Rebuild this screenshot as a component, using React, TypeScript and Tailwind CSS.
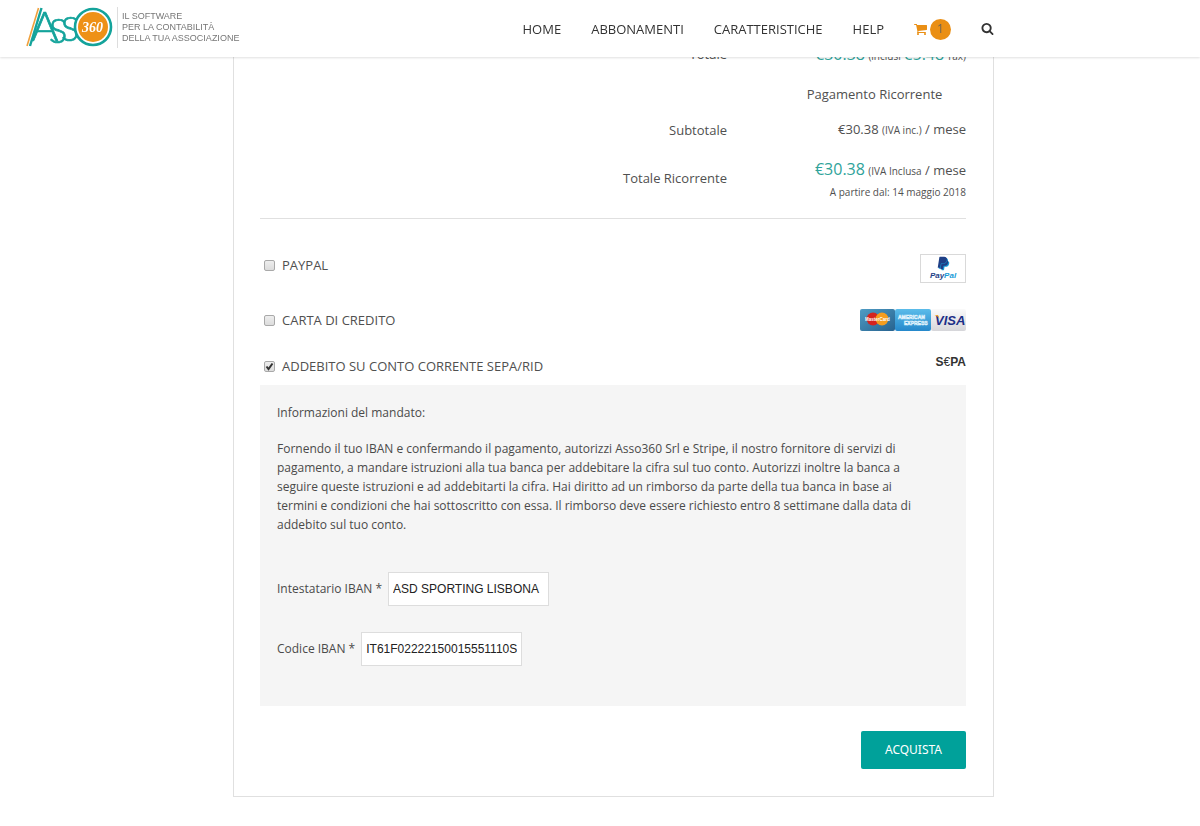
import { useState } from "react";
import { FaPaypal } from "react-icons/fa";

const menu = ["HOME", "ABBONAMENTI", "CARATTERISTICHE", "HELP"];

const Logo = () => {
  return (
    <a href="#" className="flex items-center gap-1">
      <svg className="overflow-visible" width="87" height="42" viewBox="0 0 87 42" aria-label="Asso 360" role="img">
        <path d="M1 39 L12.500 1" stroke="#f0a03c" strokeWidth="1.600" fill="none" />
        <path d="M4 39 L15.500 1" stroke="#14a39b" strokeWidth="2.400" fill="none" />
        <text x="5 23 35" y="34 36 34" fontSize="42" fontWeight="300" fill="#14a39b" stroke="#14a39b" strokeWidth="0.700" fontFamily="Lato, sans-serif">
          A<tspan fontSize="34">SS</tspan>
        </text>
        <circle cx="67" cy="20" r="18" fill="#fff" stroke="#14a39b" strokeWidth="2.600" />
        <circle cx="67" cy="20" r="15" fill="#ee9116" />
        <text x="66.500" y="24.500" textAnchor="middle" fontSize="14" fontWeight="700" fontStyle="italic" fill="#fff" fontFamily="'Liberation Serif', serif">360</text>
      </svg>
      <span className="border-l border-[#dddddd] py-1 pl-1 font-['Liberation_Sans',sans-serif] text-[9px] leading-[11px] text-[#777777]">
        IL SOFTWARE<br />PER LA CONTABILITÀ<br />DELLA TUA ASSOCIAZIONE
      </span>
    </a>
  );
};

const Header = () => {
  return (
    <header className="fixed inset-x-0 top-0 z-10 flex h-[57px] items-center justify-between bg-white pb-[2px] pl-[26px] pr-[206px] shadow-[0_1px_2px_rgba(0,0,0,0.12)]">
      <Logo />
      <nav className="flex items-center gap-[30px] pt-[3px] text-[13px] font-medium text-[#333333]">
        {menu.map((item) => (
          <a key={item} href="#">{item}</a>
        ))}
        <a href="#" aria-label="Carrello" className="flex items-center gap-[3px] text-[#ea8f14]">
          <svg width="13" height="12" viewBox="0 128 1664 1536" fill="currentColor">
            <path d="M640 1536q0 52-38 90t-90 38-90-38-38-90 38-90 90-38 90 38 38 90zm896 0q0 52-38 90t-90 38-90-38-38-90 38-90 90-38 90 38 38 90zm128-1088v512q0 24-16.5 42.5t-40.5 21.5l-1044 122q13 60 13 70 0 16-24 64h920q26 0 45 19t19 45-19 45-45 19h-1024q-26 0-45-19t-19-45q0-11 8-31.5t16-36 21.5-40 15.5-29.5l-177-823h-204q-26 0-45-19t-19-45 19-45 45-19h256q16 0 28.5 6.5t19.5 15.5 13 24.5 8 26 5.5 29.5 4.5 26h1201q26 0 45 19t19 45z" />
          </svg>
          <span className="flex size-[21px] items-center justify-center rounded-full bg-[#ea8f14] text-xs font-normal text-[#6f6552]">1</span>
        </a>
        <button type="button" aria-label="Cerca">
          <svg width="13" height="12" viewBox="0 128 1664 1664" fill="currentColor">
            <path d="M1152 832q0-185-131.5-316.5T704 384 387.5 515.5 256 832t131.5 316.5T704 1280t316.5-131.5T1152 832zm512 832q0 52-38 90t-90 38q-54 0-90-38l-343-342q-179 124-399 124-143 0-273.5-55.5t-225-150-150-225T0 832t55.5-273.5 150-225 225-150T704 128t273.5 55.5 225 150 150 225T1408 832q0 220-124 399l343 343q37 37 37 90z" />
          </svg>
        </button>
      </nav>
    </header>
  );
};

const Totals = () => {
  return (
    <table className="w-full border-b border-[#e0e0e0] text-right">
      <tbody>
        <tr className="h-[44px]">
          <th className="pr-[56px] font-normal">Totale</th>
          <td className="w-[183px] whitespace-nowrap">
            <span className="text-base text-[#2fa39a]">€30.38</span>{" "}
            <small className="text-[10px]">(inclusi <span className="text-base text-[#2fa39a]">€5.48</span> Tax)</small>
          </td>
        </tr>
        <tr className="h-[36px]">
          <td></td>
          <th className="text-center font-normal">Pagamento Ricorrente</th>
        </tr>
        <tr className="h-[36px]">
          <th className="pr-[56px] font-normal">Subtotale</th>
          <td>€30.38 <small className="text-[10px]">(IVA inc.)</small> / mese</td>
        </tr>
        <tr className="h-[70px]">
          <th className="pb-[8px] pr-[56px] font-normal">Totale Ricorrente</th>
          <td className="pb-[8px]">
            <div className="leading-[24px]">
              <span className="text-base text-[#2fa39a]">€30.38</span>{" "}
              <small className="text-[10px]">(IVA Inclusa</small> / mese
            </div>
            <div className="text-[10px] leading-[18px]">A partire dal: 14 maggio 2018</div>
          </td>
        </tr>
      </tbody>
    </table>
  );
};

const PaypalLogo = () => {
  return (
    <span className="flex h-[29px] w-[46px] flex-col items-center justify-center border border-[#d9d9d9] bg-white">
      <span className="relative h-[15px] w-[14px]">
        <FaPaypal className="absolute left-px top-px size-[14px] text-[#179bd7]" />
        <FaPaypal className="absolute left-0 top-0 size-[14px] text-[#1f3f86]" />
      </span>
      <span className="font-['Liberation_Sans',sans-serif] text-[8px] font-bold italic leading-[9px] text-[#1f3f86]">
        Pay<span className="text-[#179bd7]">Pal</span>
      </span>
    </span>
  );
};

const CardLogos = () => {
  return (
    <svg width="106" height="22" viewBox="0 0 106 22" role="img" aria-label="MasterCard, American Express, Visa">
      <defs>
        <linearGradient id="mc" x1="0" y1="0" x2="1" y2="1">
          <stop offset="0" stopColor="#4f9cc4" />
          <stop offset="1" stopColor="#27628f" />
        </linearGradient>
        <linearGradient id="amex" x1="0" y1="0" x2="0" y2="1">
          <stop offset="0" stopColor="#5bbcea" />
          <stop offset="1" stopColor="#2588cb" />
        </linearGradient>
        <linearGradient id="visa" x1="0" y1="0" x2="0" y2="1">
          <stop offset="0" stopColor="#fafafa" />
          <stop offset="1" stopColor="#d6d6da" />
        </linearGradient>
      </defs>
      <rect width="35" height="22" rx="2" fill="url(#mc)" />
      <circle cx="13" cy="10" r="6.500" fill="#d6231f" />
      <circle cx="22" cy="10" r="6.500" fill="#f59d1f" />
      <text x="17.500" y="12" textAnchor="middle" fontSize="4.500" fontWeight="700" fill="#fff" fontFamily="'Liberation Sans', sans-serif">MasterCard</text>
      <rect x="35" width="36" height="22" rx="2" fill="url(#amex)" />
      <g fill="none" stroke="#dff2fc" strokeWidth="0.600" fontSize="5" fontWeight="700" fontFamily="'Liberation Sans', sans-serif">
        <text x="38" y="10">AMERICAN</text>
        <text x="44" y="15.500">EXPRESS</text>
      </g>
      <rect x="71" width="35" height="22" rx="2" fill="url(#visa)" />
      <text x="75" y="15.500" fontSize="13" fontWeight="700" fontStyle="italic" fill="#1c2f87" fontFamily="'Liberation Sans', sans-serif">VISA</text>
      <path d="M74.500 6 h3.500 l1.500 4 q-1.500-3-5-4z" fill="#f0a020" />
    </svg>
  );
};

type OptionProps = {
  id: string;
  label: string;
  checked: boolean;
  onChange: () => void;
};

const Option = ({ id, label, checked, onChange }: OptionProps) => {
  return (
    <label htmlFor={id} className="flex items-center gap-[7px] pl-[4px]">
      <span className="relative size-[11px]">
        <input
          id={id}
          type="checkbox"
          checked={checked}
          onChange={onChange}
          className="block size-[11px] appearance-none rounded-[2px] border border-[#a9a9a9] bg-linear-to-b from-[#eeeeee] to-[#dcdcdc]"
        />
        {checked && (
          <svg className="pointer-events-none absolute inset-0" width="11" height="11" viewBox="0 0 11 11">
            <path d="M2.500 5.500 L4.500 8 L8.500 2.500" stroke="#333" strokeWidth="2" fill="none" />
          </svg>
        )}
      </span>
      {label}
    </label>
  );
};

const App = () => {
  const [method, setMethod] = useState<string>("sepa");
  const [holder, setHolder] = useState<string>("ASD SPORTING LISBONA");
  const [iban, setIban] = useState<string>("IT61F02222150015551110S12345");

  const inputClass =
    "h-[34px] w-[161px] border border-[#dddddd] bg-white px-1 font-['Liberation_Sans',sans-serif] text-xs text-[#222222]";

  return (
    <div className="min-h-screen bg-white font-['Open_Sans',sans-serif] text-[13px] leading-[19px] text-[#505050]">
      <Header />
      <main className="pb-[29px] pl-[233px] pr-[206px]">
        <div className="border border-t-0 border-[#e0e0e0] pb-[27px] pl-[26px] pr-[27px] pt-[32px]">
          <Totals />

          {/* Payment methods */}
          <div className="pt-[19px]">
            <div className="flex h-[55px] items-center justify-between">
              <Option id="paypal" label="PAYPAL" checked={method === "paypal"} onChange={() => setMethod("paypal")} />
              <div className="pt-[6px]"><PaypalLogo /></div>
            </div>
            <div className="flex h-[55px] items-center justify-between">
              <Option id="card" label="CARTA DI CREDITO" checked={method === "card"} onChange={() => setMethod("card")} />
              <CardLogos />
            </div>
            <div className="flex h-[37px] items-center justify-between">
              <Option id="sepa" label="ADDEBITO SU CONTO CORRENTE SEPA/RID" checked={method === "sepa"} onChange={() => setMethod("sepa")} />
              <span className="pb-[8px] font-['Liberation_Sans',sans-serif] text-xs font-bold leading-[16px] text-[#333333]">
                S<span className="font-normal">€</span>PA
              </span>
            </div>
          </div>

          {/* Sepa mandate */}
          <div className="bg-[#f5f5f5] px-[17px] pb-[40px] pt-[18px] text-[12px] leading-[19px] text-[#4a4a4a]">
            <p>Informazioni del mandato:</p>
            <p className="mt-[17px] pr-[24px]">
              Fornendo il tuo IBAN e confermando il pagamento, autorizzi Asso360 Srl e Stripe, il nostro fornitore di
              servizi di pagamento, a mandare istruzioni alla tua banca per addebitare la cifra sul tuo conto.
              Autorizzi inoltre la banca a seguire queste istruzioni e ad addebitarti la cifra. Hai diritto ad un
              rimborso da parte della tua banca in base ai termini e condizioni che hai sottoscritto con essa. Il
              rimborso deve essere richiesto entro 8 settimane dalla data di addebito sul tuo conto.
            </p>
            <div className="mt-[38px] flex items-center gap-[6px]">
              <label htmlFor="holder">Intestatario IBAN *</label>
              <input id="holder" type="text" value={holder} onChange={(e) => setHolder(e.target.value)} className={inputClass} />
            </div>
            <div className="mt-[26px] flex items-center gap-[6px]">
              <label htmlFor="iban">Codice IBAN *</label>
              <input id="iban" type="text" value={iban} onChange={(e) => setIban(e.target.value)} className={inputClass} />
            </div>
          </div>

          <div className="mt-[25px] flex justify-end">
            <button type="button" className="h-[38px] w-[105px] rounded-[2px] bg-[#00a19a] font-['Noto_Sans',sans-serif] text-xs text-white">
              ACQUISTA
            </button>
          </div>
        </div>
      </main>
    </div>
  );
};

export default App;
